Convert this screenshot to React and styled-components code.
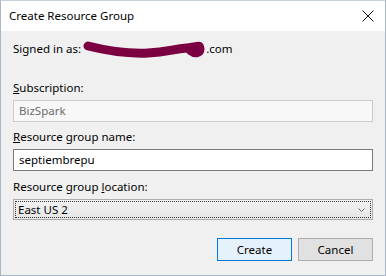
import React from "react"
import styled, { createGlobalStyle } from "styled-components"

const GlobalStyle = createGlobalStyle`
  html, body {
    margin: 0;
    padding: 0;
    background: #f0f0f0;
  }
  * {
    box-sizing: border-box;
  }
`

const Window = styled.div`
  width: 386px;
  height: 276px;
  border: 1px solid #a9b6c6;
  border-top-color: #c9d3de;
  background: #f0f0f0;
  display: flex;
  flex-direction: column;
  font-family: "Segoe UI", "Noto Sans", sans-serif;
  font-size: 11.5px;
  color: #000;
`

const TitleBar = styled.div`
  height: 30px;
  background: #fff;
  display: flex;
  align-items: center;
  justify-content: space-between;
  padding: 0 9px 0 8px;
  flex-shrink: 0;
`

const Title = styled.span`
  line-height: 16px;
  margin-top: -1px;
`

const CloseButton = styled.div`
  width: 16px;
  height: 16px;
  display: flex;
  align-items: center;
  justify-content: center;
`

const Body = styled.div`
  flex: 1;
  padding: 10px 12px 0 12px;
  display: flex;
  flex-direction: column;
`

const SignedRow = styled.div`
  display: flex;
  align-items: center;
  line-height: 16px;
  height: 16px;
`

const Scribble = styled.svg`
  margin: 0 0 0 2px;
  flex-shrink: 0;
`

const Label = styled.div`
  line-height: 16px;
  margin-top: ${(p) => p.$top}px;
  margin-bottom: 4px;
  u {
    text-decoration: underline;
    text-underline-offset: 1px;
  }
`

const TextBox = styled.div`
  width: 360px;
  height: 22px;
  border: 1px solid ${(p) => (p.$disabled ? "#cccccc" : "#7a7a7a")};
  background: ${(p) => (p.$disabled ? "#f8f8f8" : "#ffffff")};
  color: ${(p) => (p.$disabled ? "#6d6d6d" : "#000")};
  padding: 0 5px;
  display: flex;
  align-items: center;
  line-height: 16px;
`

const Select = styled.div`
  width: 360px;
  height: 21px;
  border: 1px solid #adadad;
  background: linear-gradient(#f2f2f2, #e6e6e6);
  padding: 1px;
  display: flex;
`

const SelectInner = styled.div`
  flex: 1;
  border: 1px dotted #333;
  display: flex;
  align-items: center;
  justify-content: space-between;
  padding: 0 5px 0 2px;
  line-height: 16px;
`

const ButtonRow = styled.div`
  display: flex;
  justify-content: flex-end;
  gap: 6px;
  margin-top: 18px;
`

const Button = styled.div`
  width: 75px;
  height: 23px;
  border: 1px solid ${(p) => (p.$default ? "#0078d7" : "#adadad")};
  background: ${(p) => (p.$default ? "#e5f1fb" : "#e1e1e1")};
  display: flex;
  align-items: center;
  justify-content: center;
  line-height: 16px;
`

const App = () => {
  return (
    <>
      <GlobalStyle />
      <Window>
        <TitleBar>
          <Title>Create Resource Group</Title>
          <CloseButton>
            <svg width="12" height="12" viewBox="0 0 12 12">
              <path d="M0.5 0.5 L11.5 11.5 M11.5 0.5 L0.5 11.5" stroke="#111" strokeWidth="1" fill="none" />
            </svg>
          </CloseButton>
        </TitleBar>
        <Body>
          <SignedRow>
            <span>Signed in as:</span>
            <Scribble width="123" height="20" viewBox="0 0 123 20">
              <path
                d="M5 7 C 25 12, 45 15, 65 14 S 90 10, 104 9 S 116 5, 117 10 C 117 14, 112 15, 108 12"
                stroke="#7b0042"
                strokeWidth="9"
                strokeLinecap="round"
                fill="none"
              />
            </Scribble>
            <span>.com</span>
          </SignedRow>
          <Label $top={23}>
            <u>S</u>ubscription:
          </Label>
          <TextBox $disabled>BizSpark</TextBox>
          <Label $top={7}>
            <u>R</u>esource group name:
          </Label>
          <TextBox>septiembrepu</TextBox>
          <Label $top={8}>
            Resource group <u>l</u>ocation:
          </Label>
          <Select>
            <SelectInner>
              <span>East US 2</span>
              <svg width="7" height="4" viewBox="0 0 7 4">
                <path d="M0.5 0.5 L3.5 3.5 L6.5 0.5" stroke="#6d6d6d" strokeWidth="1" fill="none" />
              </svg>
            </SelectInner>
          </Select>
          <ButtonRow>
            <Button $default>Create</Button>
            <Button>Cancel</Button>
          </ButtonRow>
        </Body>
      </Window>
    </>
  )
}

export default App
